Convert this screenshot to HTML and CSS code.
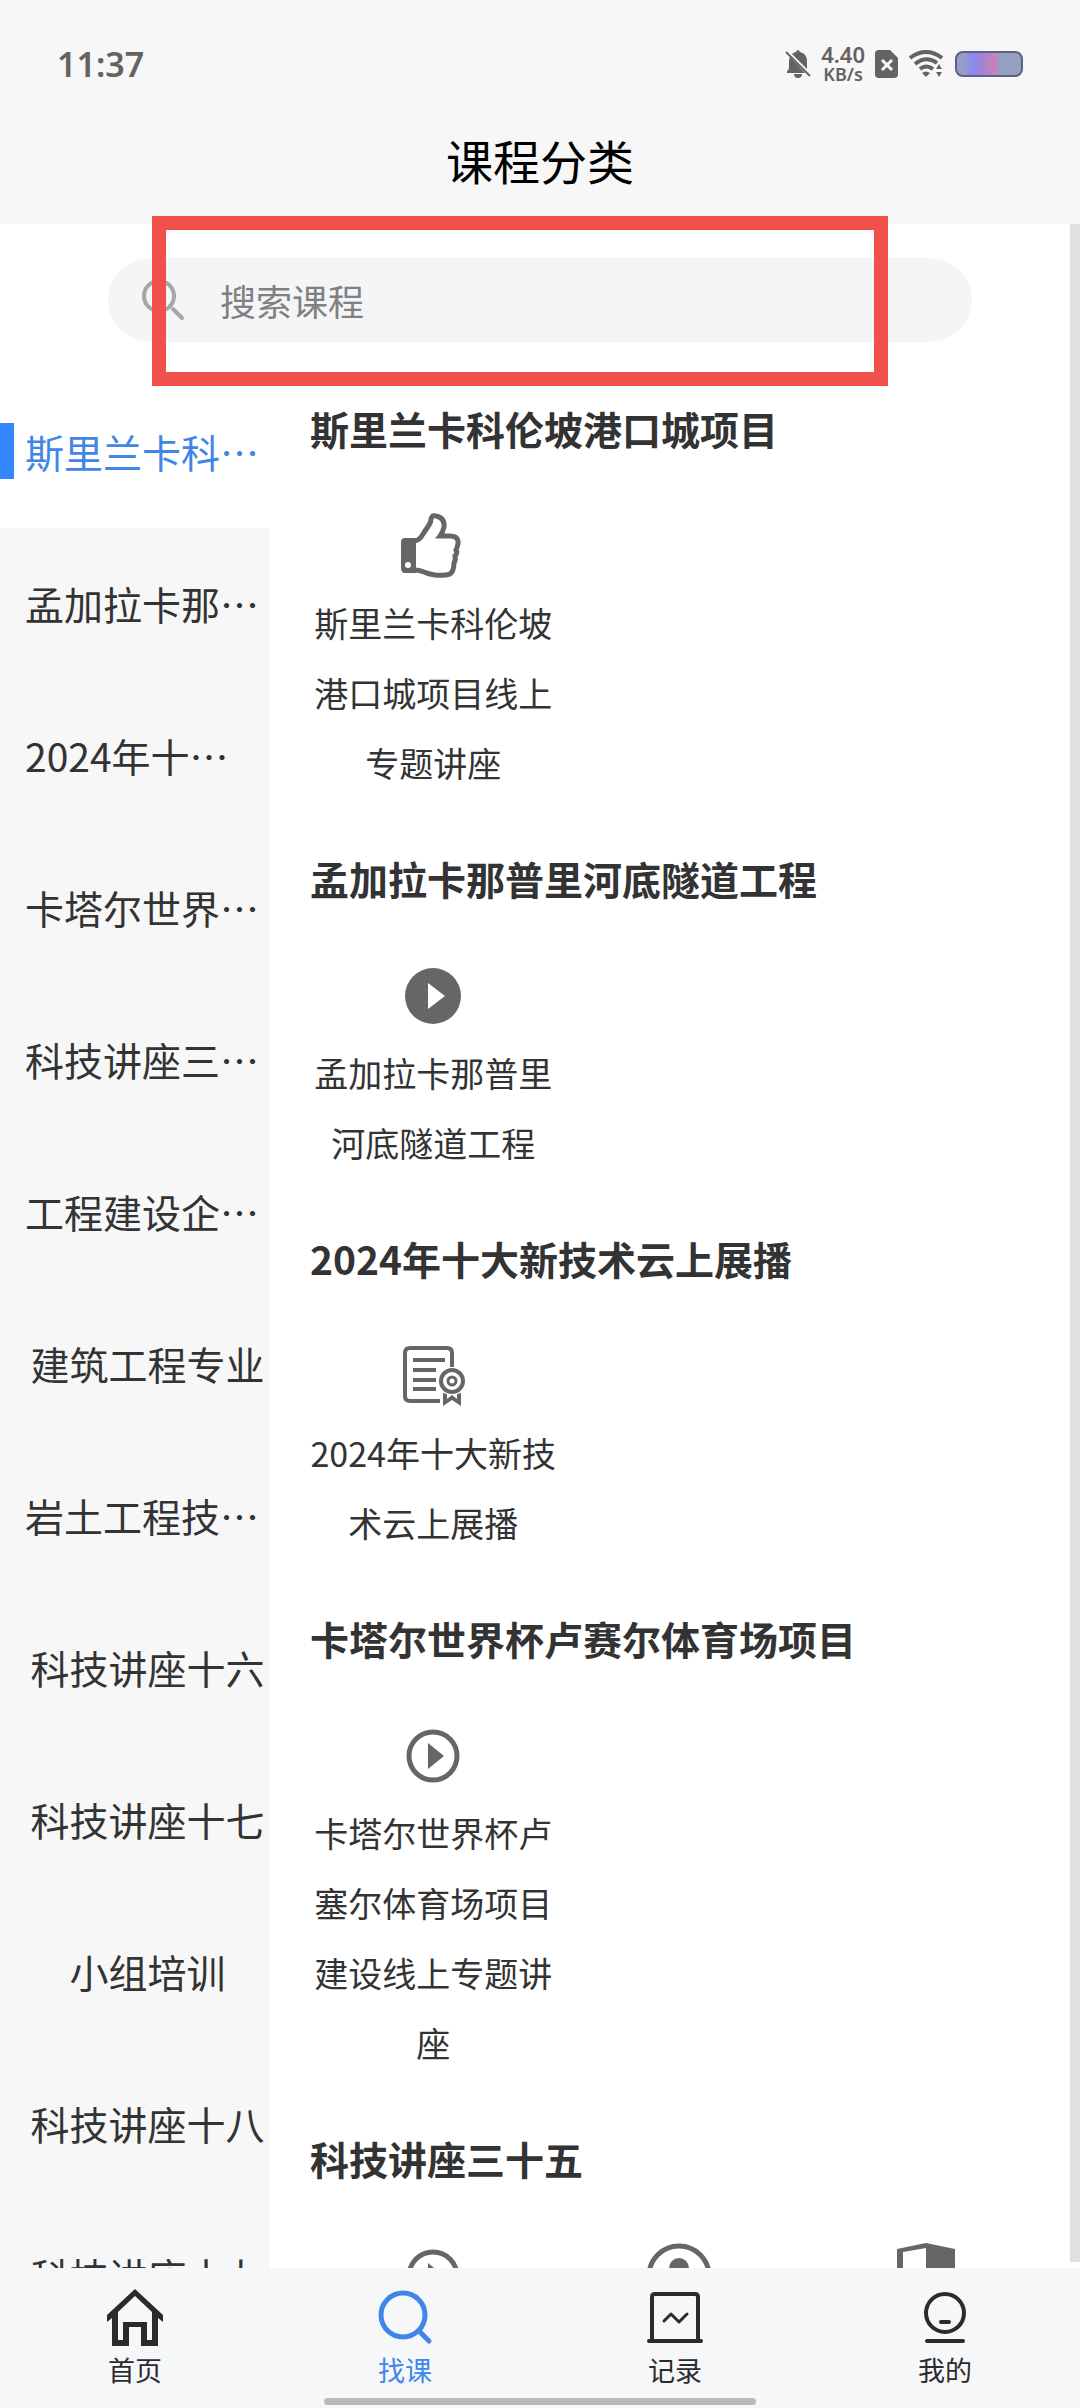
FILE: index.html
```html
<!DOCTYPE html>
<html lang="zh-CN">
<head>
    <meta charset="UTF-8">
    <meta name="viewport" content="width=device-width, initial-scale=1.0">
    <title>课程分类</title>
    <link rel="stylesheet" href="styles.css">
</head>
<body>
    <header class="header">
        <div class="status-bar">
            <span class="time">11:37</span>
            <div class="status-icons">
                <svg class="icon-bell" width="26" height="30" viewBox="0 0 26 30">
                    <path d="M5 8 L20 24 H2 V22 Q4 21 4 18 V12 Q4 10 5 8 Z M7 5 Q9 3 11 3 Q12 1 13 1 Q14 1 15 3 Q22 5 22 12 V20 Z M9 25 H17 Q17 29 13 29 Q9 29 9 25 Z" fill="#636363"/>
                    <path d="M1 3 L25 27" stroke="#636363" stroke-width="2"/>
                </svg>
                <div class="speed">
                    <span class="speed-value">4.40</span>
                    <span class="speed-unit">KB/s</span>
                </div>
                <svg class="icon-sim" width="24" height="28" viewBox="0 0 24 28">
                    <path d="M4 0 H15 L23 8 V24 Q23 28 19 28 H4 Q0 28 0 24 V4 Q0 0 4 0 Z" fill="#636363"/>
                    <path d="M7 10 L17 20 M17 10 L7 20" stroke="#f7f7f7" stroke-width="3"/>
                </svg>
                <svg class="icon-wifi" width="36" height="28" viewBox="0 0 36 28">
                    <g fill="none" stroke="#636363" stroke-width="4">
                        <path d="M1 8 Q17 -4 33 8"/>
                        <path d="M6 14 Q17 5 28 13"/>
                        <path d="M11 19 Q17 14 24 19"/>
                    </g>
                    <path d="M13 23 Q17 20 21 23 L17 27 Z M27 19 L30 14 L33 19 Z M27 22 H33 L30 27 Z" fill="#636363"/>
                </svg>
                <span class="battery"></span>
            </div>
        </div>
        <h1 class="page-title">课程分类</h1>
    </header>

    <main class="main">
        <form class="search">
            <label class="search-box" for="keyword">
                <svg width="44" height="44" viewBox="0 0 44 44" fill="none" stroke="#a5a5aa">
                    <circle cx="17" cy="18" r="15" stroke-width="4"/>
                    <path d="M31 31 L40 40" stroke-width="4" stroke-linecap="round"/>
                </svg>
                <input type="text" id="keyword" name="keyword" placeholder="搜索课程" aria-label="搜索课程">
            </label>
            <div class="highlight"></div>
        </form>

        <div class="content">
            <nav class="sidebar">
                <a href="#s1" class="category clipped active">斯里兰卡科…</a>
                <a href="#s2" class="category clipped">孟加拉卡那…</a>
                <a href="#s3" class="category clipped">2024年十…</a>
                <a href="#s4" class="category clipped">卡塔尔世界…</a>
                <a href="#s5" class="category clipped">科技讲座三…</a>
                <a href="#" class="category clipped">工程建设企…</a>
                <a href="#" class="category">建筑工程专业</a>
                <a href="#" class="category clipped">岩土工程技…</a>
                <a href="#" class="category">科技讲座十六</a>
                <a href="#" class="category">科技讲座十七</a>
                <a href="#" class="category">小组培训</a>
                <a href="#" class="category">科技讲座十八</a>
                <a href="#" class="category">科技讲座十九</a>
            </nav>

            <div class="sections">
                <section id="s1">
                    <h2>斯里兰卡科伦坡港口城项目</h2>
                    <div class="courses">
                        <a href="#" class="course">
                            <svg class="course-icon" viewBox="0 0 72 72">
                                <path d="M8 28 H19 V63 H8 Q4 63 4 58 V32 Q4 28 8 28 Z" fill="#666"/>
                                <circle cx="11" cy="55" r="3" fill="#fff"/>
                                <path d="M18 31 Q23 30 26 24 L32 15 Q34 12 34 9 Q35 5 39 6 Q48 8 47 17 Q46 22 43 26 H53 Q62 26 61 34 Q60 38 59 40 Q61 43 58 46 Q59 50 57 53 Q57 61 53 64 Q48 66 38 65 Q31 64 27 62 Q22 60 18 60" fill="none" stroke="#666" stroke-width="5"/>
                            </svg>
                            <span>斯里兰卡科伦坡港口城项目线上专题讲座</span>
                        </a>
                    </div>
                </section>

                <section id="s2">
                    <h2>孟加拉卡那普里河底隧道工程</h2>
                    <div class="courses">
                        <a href="#" class="course">
                            <svg class="course-icon" viewBox="0 0 72 72">
                                <circle cx="36" cy="36" r="28" fill="#666"/>
                                <path d="M31 23 L48 36 L31 49 Z" fill="#fff"/>
                            </svg>
                            <span>孟加拉卡那普里河底隧道工程</span>
                        </a>
                    </div>
                </section>

                <section id="s3">
                    <h2>2024年十大新技术云上展播</h2>
                    <div class="courses">
                        <a href="#" class="course">
                            <svg class="course-icon" viewBox="0 0 72 72" fill="none" stroke="#666" stroke-width="4">
                                <path d="M43 61 H13 Q8 61 8 56 V13 Q8 8 13 8 H50 Q55 8 55 13 V27"/>
                                <path d="M16 20 H48 M16 30 H39 M16 40 H39 M16 49 H39"/>
                                <circle cx="55" cy="41" r="11"/>
                                <circle cx="55" cy="41" r="4" stroke-width="3"/>
                                <path d="M46 53 L50 54 V59 L55 55 L60 59 V54 L64 53 V66 L55 60 L46 66 Z" fill="#666" stroke="none"/>
                            </svg>
                            <span>2024年十大新技术云上展播</span>
                        </a>
                    </div>
                </section>

                <section id="s4">
                    <h2>卡塔尔世界杯卢赛尔体育场项目</h2>
                    <div class="courses">
                        <a href="#" class="course">
                            <svg class="course-icon" viewBox="0 0 72 72">
                                <circle cx="36" cy="36" r="24" fill="none" stroke="#666" stroke-width="5"/>
                                <path d="M31 23 L47 36 L31 49 Z" fill="#666"/>
                            </svg>
                            <span>卡塔尔世界杯卢塞尔体育场项目建设线上专题讲座</span>
                        </a>
                    </div>
                </section>

                <section id="s5">
                    <h2>科技讲座三十五</h2>
                    <div class="courses">
                        <a href="#" class="course">
                            <svg class="course-icon" viewBox="0 0 72 72">
                                <circle cx="36" cy="36" r="24" fill="none" stroke="#666" stroke-width="5"/>
                                <path d="M31 23 L47 36 L31 49 Z" fill="#666"/>
                            </svg>
                        </a>
                        <a href="#" class="course">
                            <svg class="course-icon" viewBox="0 0 72 72">
                                <circle cx="36" cy="36" r="30" fill="none" stroke="#666" stroke-width="5"/>
                                <circle cx="36" cy="28" r="10" fill="#666"/>
                                <path d="M18 56 Q20 42 36 42 Q52 42 54 56" fill="#666"/>
                            </svg>
                        </a>
                        <a href="#" class="course">
                            <svg class="course-icon" viewBox="0 0 72 72">
                                <path d="M36 3 L65 9 V60 L36 66 L7 60 V9 Z M36 8 L13 12 V56 L36 61 Z" fill="#666" fill-rule="evenodd"/>
                            </svg>
                        </a>
                    </div>
                </section>
            </div>
        </div>
        <div class="scrollbar"></div>
    </main>

    <footer class="tab-bar">
        <nav class="tabs">
            <a href="#" class="tab">
                <svg viewBox="0 0 60 60">
                    <path d="M2 27 L30 1 L58 27 V34 L53 30 V58 H36 V39 H24 V58 H7 V30 L2 34 Z M30 8 L13 24 V52 H18 V34 H42 V52 H47 V24 Z" fill="#2b2b2d" fill-rule="evenodd"/>
                </svg>
                <span>首页</span>
            </a>
            <a href="#" class="tab active">
                <svg viewBox="0 0 60 60" fill="none" stroke="#3f86e8" stroke-width="5">
                    <ellipse cx="28" cy="27" rx="22" ry="22"/>
                    <path d="M45 44 L54 53" stroke-linecap="round"/>
                </svg>
                <span>找课</span>
            </a>
            <a href="#" class="tab">
                <svg viewBox="0 0 60 60" fill="none" stroke="#2b2b2d" stroke-width="4" stroke-linecap="round" stroke-linejoin="round">
                    <path d="M7 53 V9 Q7 6 10 6 H50 Q53 6 53 9 V53"/>
                    <path d="M4 53 H56"/>
                    <path d="M19 33 L26 26 L34 34 L42 26" stroke-width="3"/>
                </svg>
                <span>记录</span>
            </a>
            <a href="#" class="tab">
                <svg viewBox="0 0 60 60" fill="none" stroke="#2b2b2d" stroke-width="4" stroke-linecap="round">
                    <circle cx="30" cy="25" r="19"/>
                    <path d="M26 34 H34 M12 53 H48"/>
                </svg>
                <span>我的</span>
            </a>
        </nav>
        <div class="home-indicator"></div>
    </footer>
</body>
</html>
```

FILE: styles.css
```css
* {
    box-sizing: border-box;
}

body {
    margin: 0;
    height: 100vh;
    display: flex;
    flex-direction: column;
    font-family: "Noto Sans CJK SC", sans-serif;
    color: #333;
    background-color: #fff;
}

a {
    color: inherit;
    text-decoration: none;
}

svg {
    display: block;
}

/* header */
.header {
    background-color: #f7f7f7;
    padding-bottom: 34px;
}

.status-bar {
    display: flex;
    justify-content: space-between;
    align-items: center;
    padding: 42px 57px 18px;
}

.time {
    font-family: "Noto Sans", sans-serif;
    font-size: 34px;
    font-weight: 600;
    line-height: 44px;
    color: #636363;
}

.status-icons {
    display: flex;
    align-items: center;
    gap: 10px;
}

.speed {
    display: flex;
    flex-direction: column;
    align-items: center;
    font-family: "Noto Sans", sans-serif;
    font-weight: 600;
    line-height: 20px;
    color: #636363;
}

.speed-value {
    font-size: 22px;
}

.speed-unit {
    font-size: 18px;
}

.battery {
    width: 68px;
    height: 26px;
    border: 2px solid #5f5f88;
    border-radius: 8px;
    background: linear-gradient(90deg, #96a0c6 10%, #8a88f0 25%, #a884cc 42%, #c880b8 58%, #98a0c2 68%);
}

.page-title {
    margin: 0;
    padding-top: 26px;
    font-size: 47px;
    font-weight: 400;
    line-height: 60px;
    text-align: center;
    color: #000;
}

/* main */
.main {
    position: relative;
    flex: 1;
    min-height: 0;
    display: flex;
    flex-direction: column;
}

.search {
    position: relative;
    padding: 34px 0;
}

.search-box {
    display: flex;
    align-items: center;
    gap: 34px;
    width: 80%;
    height: 84px;
    margin: 0 auto;
    padding: 0 34px;
    border-radius: 42px;
    background-color: #f4f5f7;
}

.search-box input {
    flex: 1;
    min-width: 0;
    padding: 0;
    border: none;
    outline: none;
    background: none;
    font-family: inherit;
    font-size: 36px;
    color: #333;
}

.search-box input::placeholder {
    color: #808080;
}

.highlight {
    position: absolute;
    top: -8px;
    left: 152px;
    width: 736px;
    height: 170px;
    border: 14px solid #f0524b;
    pointer-events: none;
}

.content {
    flex: 1;
    min-height: 0;
    display: flex;
    overflow: hidden;
}

.sidebar {
    width: 25%;
    flex-shrink: 0;
}

.category {
    display: flex;
    align-items: center;
    justify-content: center;
    height: 152px;
    padding-left: 25px;
    padding-bottom: 2px;
    font-size: 39px;
    white-space: nowrap;
    background-color: #f7f7f7;
}

.category.clipped {
    justify-content: flex-start;
}

.category.active {
    padding-left: 0;
    gap: 11px;
    color: #3f86e8;
    background-color: #fff;
}

.category.active::before {
    content: "";
    width: 14px;
    height: 56px;
    background-color: #3388ff;
}

.sections {
    flex: 1;
    padding: 22px 31px 0 40px;
}

section {
    margin-bottom: 50px;
}

h2 {
    margin: 0 0 52px;
    font-size: 39px;
    font-weight: 700;
    line-height: 60px;
}

.courses {
    display: grid;
    grid-template-columns: repeat(3, 1fr);
}

.course {
    display: flex;
    flex-direction: column;
    align-items: center;
    font-size: 34px;
    line-height: 70px;
    text-align: center;
}

.course-icon {
    width: 72px;
    height: 72px;
    margin-bottom: 6px;
}

.scrollbar {
    position: absolute;
    top: 0;
    right: 0;
    bottom: 6px;
    width: 10px;
    background-color: #e0e0e0;
}

/* bottom tab bar */
.tab-bar {
    position: relative;
    padding: 20px 0 18px;
    background-color: #f6f7f9;
}

.tabs {
    display: grid;
    grid-template-columns: repeat(4, 1fr);
}

.tab {
    display: flex;
    flex-direction: column;
    align-items: center;
    gap: 2px;
    font-size: 27px;
    line-height: 40px;
    color: #2b2b2d;
}

.tab svg {
    width: 60px;
    height: 60px;
}

.tab.active {
    color: #3f86e8;
}

.home-indicator {
    position: absolute;
    left: 30%;
    bottom: 3px;
    width: 40%;
    height: 7px;
    border-radius: 4px;
    background-color: #b9babc;
}
```
